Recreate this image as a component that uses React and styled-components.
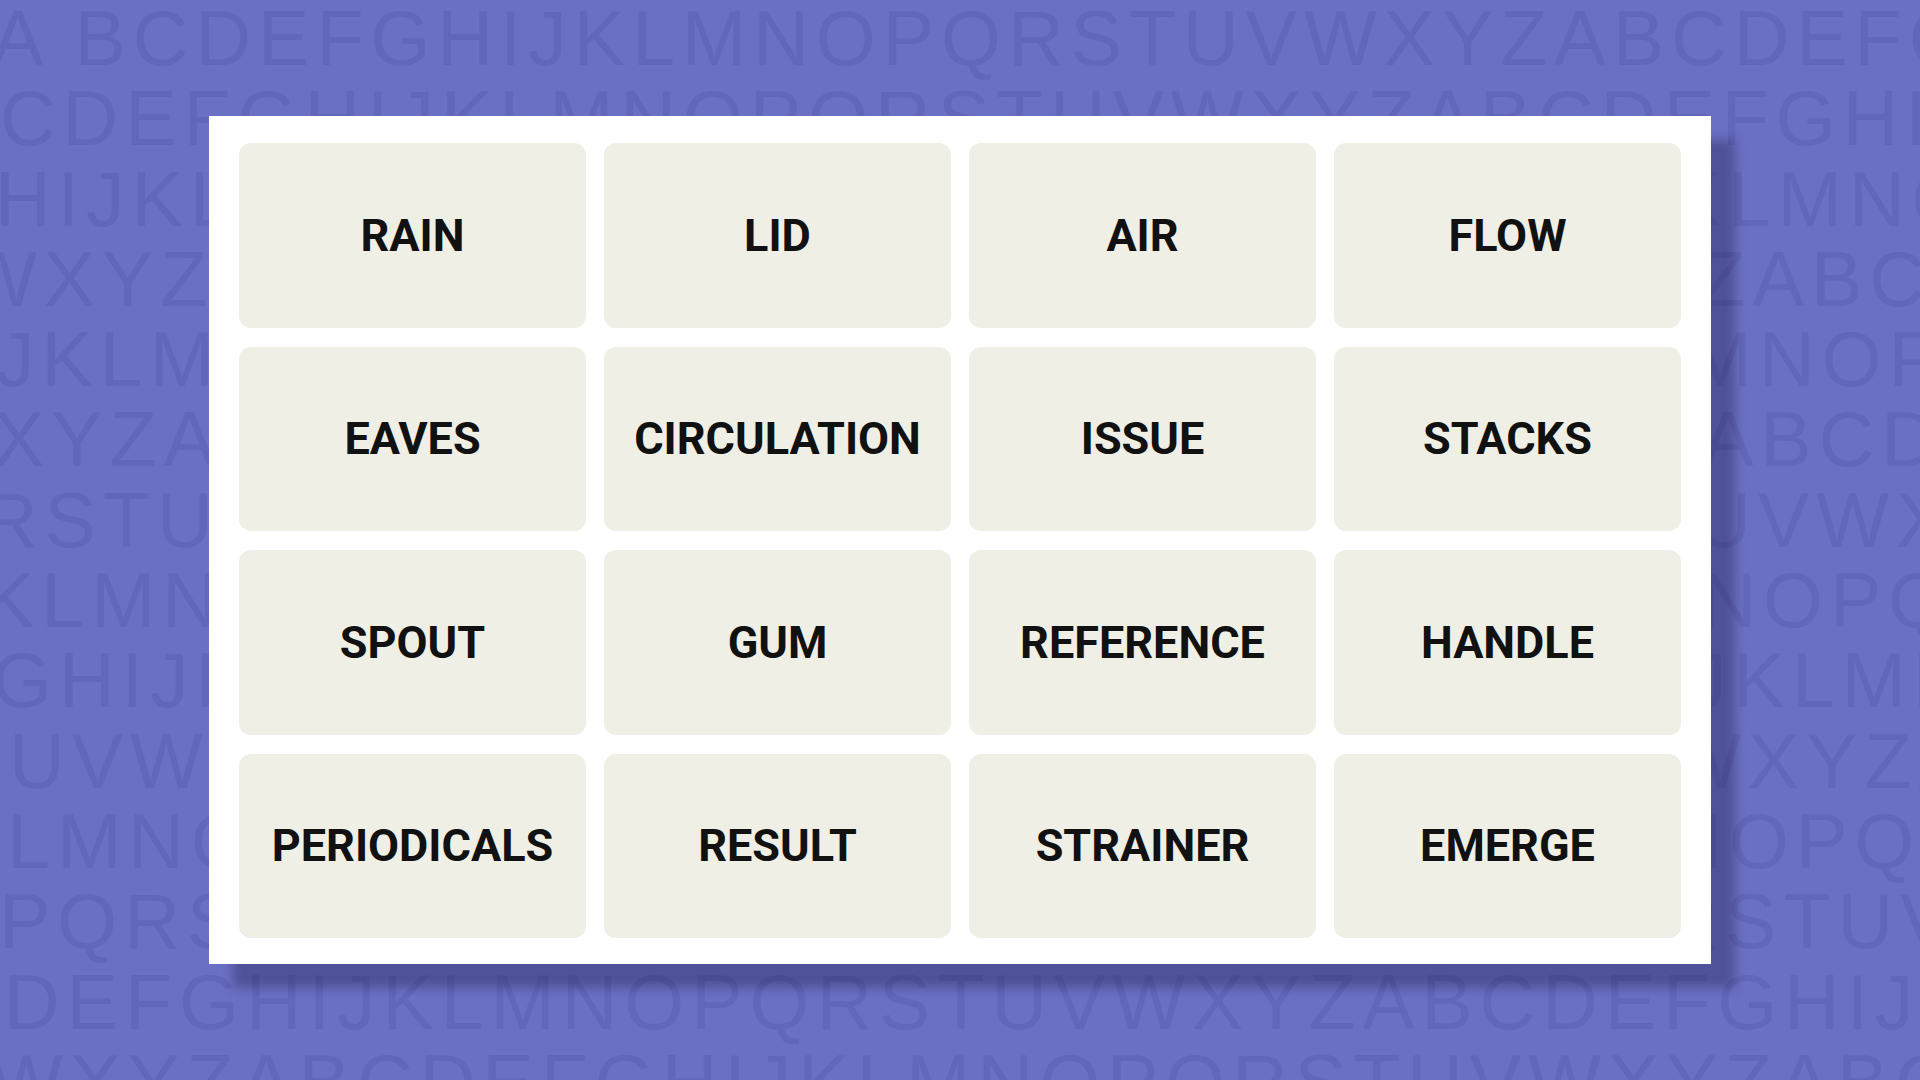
import React from "react";
import styled, { createGlobalStyle } from "styled-components";

const GlobalStyle = createGlobalStyle`
  html, body {
    margin: 0;
    padding: 0;
    background: #6c70c4;
    overflow: hidden;
  }
`;

const Page = styled.div`
  display: grid;
  grid-template-columns: 100%;
  grid-template-rows: 100%;
  width: 1920px;
  height: 1080px;
  overflow: hidden;
  background: #6c70c4;
`;

const Backdrop = styled.div`
  grid-area: 1 / 1;
  min-width: 0;
  overflow: hidden;
  display: flex;
  flex-direction: column;
  font-family: "Liberation Sans", Arial, sans-serif;
  font-size: 77px;
  line-height: 80.3px;
  letter-spacing: 7px;
  color: #6367ba;
  white-space: nowrap;
  user-select: none;
`;

const LetterRow = styled.div`
  margin-left: ${(p) => p.$offset}px;
  margin-top: ${(p) => (p.$first ? -2 : 0)}px;
`;

const Board = styled.div`
  grid-area: 1 / 1;
  align-self: center;
  justify-self: center;
  width: 1502px;
  height: 848px;
  box-sizing: border-box;
  padding: 27px 30px 26px;
  background: #ffffff;
  box-shadow: 24px 24px 10px rgba(20, 20, 60, 0.32);
`;

const Grid = styled.div`
  display: grid;
  grid-template-columns: repeat(4, 1fr);
  grid-template-rows: repeat(4, 1fr);
  column-gap: 18px;
  row-gap: 19px;
  height: 100%;
`;

const Tile = styled.div`
  display: flex;
  align-items: center;
  justify-content: center;
  background: #efefe6;
  border-radius: 12px;
  font-family: Roboto, "Liberation Sans", sans-serif;
  font-weight: 700;
  font-size: 45px;
  color: #111111;
  text-transform: uppercase;
`;

const ABC = "ABCDEFGHIJKLMNOPQRSTUVWXYZ";

const run = (start, count = 36) => {
  const i = ABC.indexOf(start);
  let s = "";
  for (let k = 0; k < count; k++) s += ABC[(i + k) % 26];
  return s;
};

const rows = [
  { text: "A " + run("B"), offset: -8 },
  { text: run("C"), offset: 0 },
  { text: run("H"), offset: -5 },
  { text: run("W"), offset: -36 },
  { text: run("J"), offset: -4 },
  { text: run("X"), offset: -7 },
  { text: run("R"), offset: -18 },
  { text: run("K"), offset: -17 },
  { text: run("G"), offset: -8 },
  { text: run("T"), offset: -45 },
  { text: run("K"), offset: -51 },
  { text: run("P"), offset: -1 },
  { text: run("D"), offset: 4 },
  { text: run("W"), offset: -10 },
];

const words = [
  "Rain", "Lid", "Air", "Flow",
  "Eaves", "Circulation", "Issue", "Stacks",
  "Spout", "Gum", "Reference", "Handle",
  "Periodicals", "Result", "Strainer", "Emerge",
];

const App = () => (
  <>
    <GlobalStyle />
    <Page>
      <Backdrop aria-hidden="true">
        {rows.map((r, i) => (
          <LetterRow key={i} $offset={r.offset} $first={i === 0}>
            {r.text}
          </LetterRow>
        ))}
      </Backdrop>
      <Board>
        <Grid>
          {words.map((w) => (
            <Tile key={w}>{w}</Tile>
          ))}
        </Grid>
      </Board>
    </Page>
  </>
);

export default App;
